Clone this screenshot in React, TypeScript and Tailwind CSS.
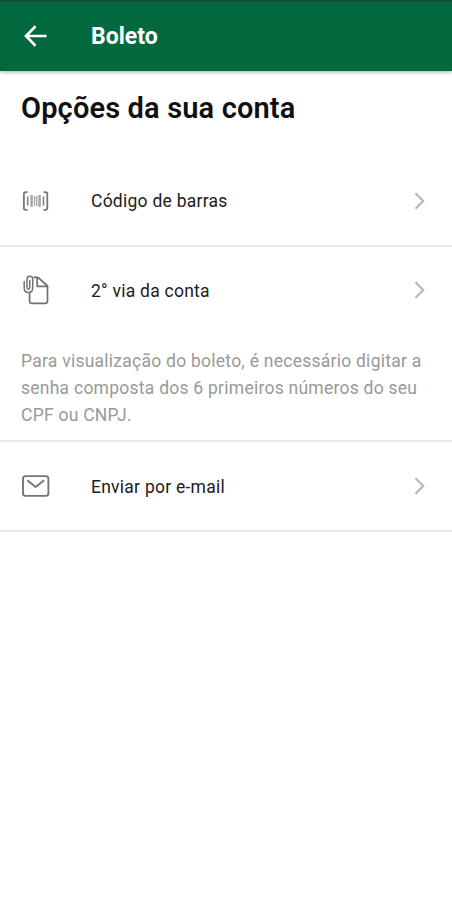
import type { ReactNode } from "react";

function Chevron() {
  return (
    <svg className="h-[18px] w-3 shrink-0" viewBox="0 0 12 18" fill="none" stroke="#b5b5b5" strokeWidth="2">
      <path d="M1.5 1.2 L9.3 9 L1.5 16.8" />
    </svg>
  );
}

function BarcodeIcon() {
  return (
    <svg className="size-[30px]" viewBox="0 0 30 30" fill="none" stroke="#777" strokeWidth="1.8">
      <path d="M7.5 6.2H5.6Q3.9 6.2 3.9 8V22Q3.9 23.8 5.6 23.8H7.5M23.5 6.2H25.4Q27.3 6.2 27.3 8V22Q27.3 23.8 25.4 23.8H23.5" />
      <path d="M7.7 10.5V19.5M23.5 10.5V19.5" strokeWidth="1.4" />
      <path d="M11.6 9V21M19.6 9V21" stroke="#a5a5a5" strokeWidth="2.4" />
      <path d="M14.5 10V20M16.7 10V20" stroke="#a0a0a0" strokeWidth="1.3" />
    </svg>
  );
}

function DocumentIcon() {
  return (
    <svg className="size-[30px]" viewBox="0 0 30 30" fill="none" stroke="#707070" strokeWidth="1.7" strokeLinejoin="round">
      <path d="M13.5 2.3H18L27.5 11V26Q27.5 28.4 25.1 28.4H12Q9.6 28.4 9.6 26V18" />
      <path d="M17.2 2.5V11.3H27.2" />
      <path d="M4.2 6.5V13Q4.2 17.5 8.4 17.5Q12.7 17.5 12.7 13V4.5Q12.7 1.3 9.9 1.3Q7 1.3 7 4.5V12.6Q7 14.3 8.4 14.3Q9.8 14.3 9.8 12.6V5.5" strokeWidth="1.5" strokeLinecap="round" />
    </svg>
  );
}

function EnvelopeIcon() {
  return (
    <svg className="size-[30px]" viewBox="0 0 30 30" fill="none" stroke="#757575" strokeWidth="1.9">
      <rect x="3" y="5.1" width="25.4" height="19.8" rx="2.6" />
      <path d="M7.3 9.3L15.6 16L24.2 9.3" />
    </svg>
  );
}

function Option({ icon, label }: { icon: ReactNode; label: string }) {
  return (
    <button className="flex h-full w-full items-center pr-[26px] pl-5 text-left">
      {icon}
      <span className="ml-[41px] flex-1 pt-0.5 text-[17.5px] tracking-[0.25px] whitespace-nowrap text-[#202020]">{label}</span>
      <Chevron />
    </button>
  );
}

export default function App() {
  return (
    <div className="h-[900px] w-[452px] overflow-hidden bg-white font-['Roboto',sans-serif]">
      <header className="flex h-[71px] items-center border-t-2 border-[#174f36] bg-[#02693f] pb-0.5 pl-6 text-white shadow-[0_1px_4px_rgba(0,0,0,0.35)]">
        <svg className="h-[22px] w-[23px]" viewBox="0 0 23 22" fill="none" stroke="currentColor" strokeWidth="2.7">
          <path d="M22.5 11H2.5M11.5 1.3L2 11L11.5 20.7" />
        </svg>
        <h1 className="ml-11 pt-1 text-[23px] font-bold">Boleto</h1>
      </header>
      <main>
        <h2 className="h-[85px] pt-[19px] pl-[21px] text-[29px] leading-9 font-semibold tracking-[0.15px] whitespace-nowrap text-[#101010]">
          Opções da sua conta
        </h2>
        <div className="h-[91px] border-b-2 border-[#e8e8e8]">
          <Option icon={<BarcodeIcon />} label="Código de barras" />
        </div>
        <section className="h-[195px] border-b-2 border-[#e8e8e8]">
          <div className="h-[86px]">
            <Option icon={<DocumentIcon />} label="2° via da conta" />
          </div>
          <p className="pt-[15px] pl-[21px] text-[17.5px] leading-[27px] tracking-[0.25px] whitespace-nowrap text-[#999]">
            Para visualização do boleto, é necessário digitar a<br />
            senha composta dos 6 primeiros números do seu<br />
            CPF ou CNPJ.
          </p>
        </section>
        <div className="h-[90px] border-b-2 border-[#e8e8e8]">
          <Option icon={<EnvelopeIcon />} label="Enviar por e-mail" />
        </div>
      </main>
    </div>
  );
}
